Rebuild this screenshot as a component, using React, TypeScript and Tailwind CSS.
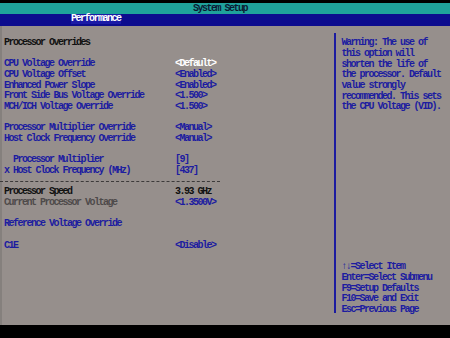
import React from "react";

const BLUE = "text-[#1c1ca0]";

type Row = { label?: string; value?: string; kind?: string; indent?: boolean };

const rows: Row[] = [
  { label: "Processor Overrides", kind: "head" },
  {},
  { label: "CPU Voltage Override", value: "<Default>", kind: "sel" },
  { label: "CPU Voltage Offset", value: "<Enabled>" },
  { label: "Enhanced Power Slope", value: "<Enabled>" },
  { label: "Front Side Bus Voltage Override", value: "<1.500>" },
  { label: "MCH/ICH Voltage Override", value: "<1.500>" },
  {},
  { label: "Processor Multiplier Override", value: "<Manual>" },
  { label: "Host Clock Frequency Override", value: "<Manual>" },
  {},
  { label: "Processor Multiplier", value: "[9]", indent: true },
  { label: "x Host Clock Frequency (MHz)", value: "[437]" },
  { kind: "dash" },
  { label: "Processor Speed", value: "3.93 GHz", kind: "info" },
  { label: "Current Processor Voltage", value: "<1.3500V>", kind: "dim" },
  {},
  { label: "Reference Voltage Override" },
  {},
  { label: "C1E", value: "<Disable>" },
];

const help: string[] = [
  "Warning: The use of",
  "this option will",
  "shorten the life of",
  "the processor. Default",
  "value strongly",
  "recommended. This sets",
  "the CPU Voltage (VID).",
  "", "", "", "", "", "", "", "", "", "", "", "", "", "",
  "\u2191\u2193=Select Item",
  "Enter=Select Submenu",
  "F9=Setup Defaults",
  "F10=Save and Exit",
  "Esc=Previous Page",
];

export default function App() {
  return (
    <div
      className="w-[450px] h-[338px] bg-black flex flex-col overflow-hidden text-[10px] tracking-[-1.5px] font-bold whitespace-pre"
      style={{ fontFamily: '"Liberation Mono", "DejaVu Sans Mono", monospace' }}
    >
      <div className="h-[3px] shrink-0" />
      <div className="h-[11px] shrink-0 bg-[#1fa29b] flex items-center pl-[193px] text-[#0b1a34] leading-none">
        System Setup
      </div>
      <div className="h-[12px] shrink-0 bg-[#0c0c8e] flex items-start pl-[71px]">
        <div className="h-[10px] w-[50px] bg-[#1a1aa6] text-white flex items-center leading-none">
          Performance
        </div>
      </div>
      <div className="h-[299px] shrink-0 bg-[#968f8c] flex border-l-2 border-[#85807d]">
        <div className="w-[332px] shrink-0 pl-[2px] pt-[11.5px] flex flex-col">
          {rows.map((r, i) => {
            if (r.kind === "dash") {
              return (
                <div key={i} className="h-[10.68px] flex items-center -ml-[4px]">
                  <div className="w-[220px] border-t border-dashed border-[#3c3a3a]" />
                </div>
              );
            }
            const labelColor =
              r.kind === "head" || r.kind === "info"
                ? "text-[#111111]"
                : r.kind === "dim"
                ? "text-[#4e4a4a]"
                : BLUE;
            const valueColor =
              r.kind === "sel" ? "text-white" : r.kind === "info" ? "text-[#111111]" : BLUE;
            return (
              <div key={i} className="h-[10.68px] flex items-center leading-none">
                <div className={`w-[171px] shrink-0 ${labelColor} ${r.indent ? "pl-[9px]" : ""}`}>
                  {r.label ?? ""}
                </div>
                <div className={valueColor}>{r.value ?? ""}</div>
              </div>
            );
          })}
        </div>
        <div className="w-[1.5px] shrink-0 mt-[7px] h-[280px] bg-[#1c1ca0]" />
        <div className="pl-[6px] pt-[12px] flex flex-col">
          {help.map((t, i) => (
            <div key={i} className={`h-[10.68px] flex items-center leading-none ${BLUE}`}>
              {t || "\u00a0"}
            </div>
          ))}
        </div>
      </div>
    </div>
  );
}
